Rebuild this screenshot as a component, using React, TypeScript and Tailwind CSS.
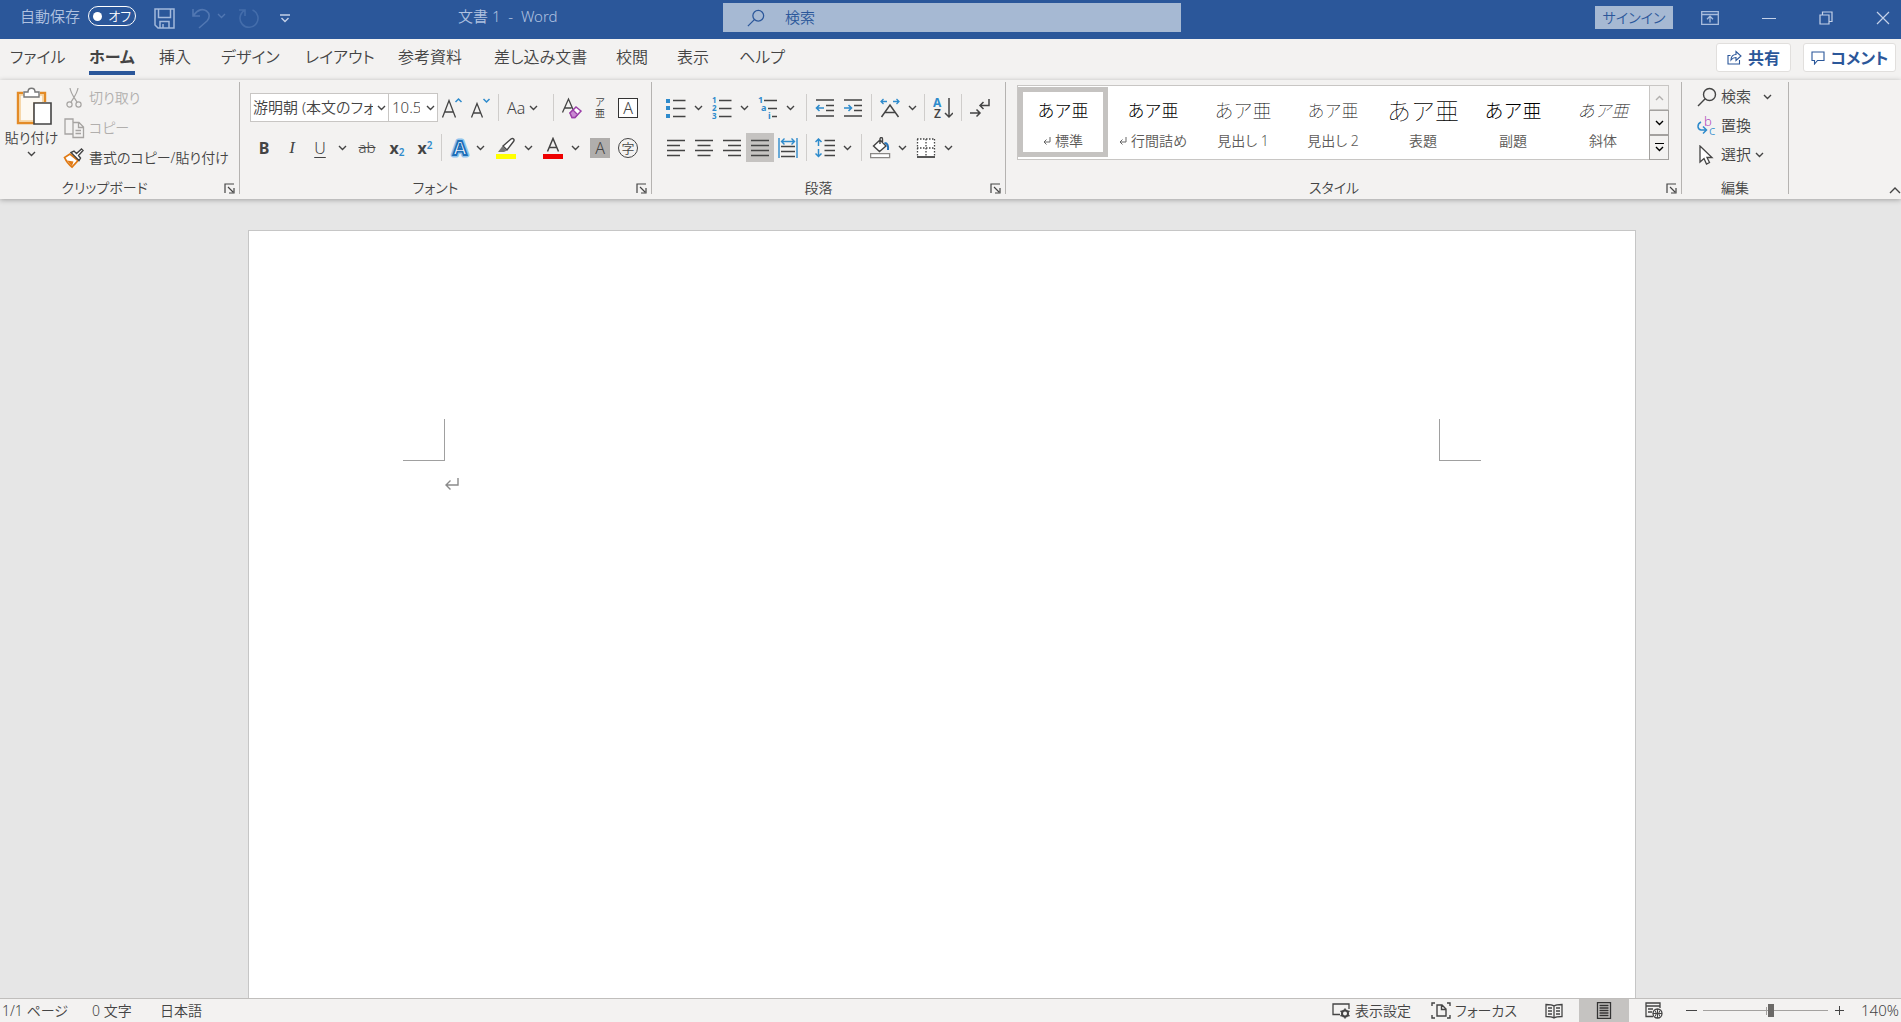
import type { ReactNode } from "react";

const INK = "#444444";
const BLUE = "#2e8bcc";

interface SvgProps {
  w?: number;
  h?: number;
  children: ReactNode;
}

function Svg({ w = 20, h = 20, children }: SvgProps) {
  return (
    <svg width={w} height={h} viewBox={`0 0 ${w} ${h}`} fill="none" stroke={INK} strokeWidth="1.3" className="shrink-0" aria-hidden="true">
      {children}
    </svg>
  );
}

function Chevron({ up = false }: { up?: boolean }) {
  return (
    <svg width="9" height="6" viewBox="0 0 9 6" fill="none" stroke="currentColor" strokeWidth="1.4" className="shrink-0" aria-hidden="true">
      <path d={up ? "M1 5 4.5 1.5 8 5" : "M1 1 4.5 4.5 8 1"} />
    </svg>
  );
}

function Tool({ label, wide = true, active = false, children }: { label: string; wide?: boolean; active?: boolean; children: ReactNode }) {
  return (
    <button
      type="button"
      aria-label={label}
      className={`flex h-[29px] shrink-0 items-center justify-center ${wide ? "w-7" : "w-6"} ${active ? "bg-[#c5c3c1]" : ""}`}
    >
      {children}
    </button>
  );
}

function Drop({ label }: { label: string }) {
  return (
    <button type="button" aria-label={label} className="flex h-[29px] w-4 shrink-0 items-center justify-center">
      <Chevron />
    </button>
  );
}

function Divider() {
  return <span className="mx-1 h-[27px] w-px shrink-0 bg-[#cfcdcb]" />;
}

function Launcher({ label }: { label: string }) {
  return (
    <button type="button" aria-label={label} className="flex w-5 shrink-0 justify-center">
      <Svg w={11} h={11}>
        <path d="M1 10V1h9M4 4l5 5M10 5v5H5" strokeWidth="1.2" />
      </Svg>
    </button>
  );
}

function Group({ title, launcher = true, className = "", children }: { title: string; launcher?: boolean; className?: string; children: ReactNode }) {
  return (
    <section aria-label={title} className={`flex shrink-0 flex-col border-r border-[#b5b3b1] ${className}`}>
      <div className="flex-1">{children}</div>
      <div className="flex h-3 items-center">
        <span className={`flex-1 text-center text-sm leading-3 ${launcher ? "pr-2.5" : ""}`}>{title}</span>
        {launcher && <Launcher label={`${title}の設定`} />}
      </div>
    </section>
  );
}

const tabs = [
  { name: "ファイル", width: "w-[79px]" },
  { name: "ホーム", width: "w-[70px]", active: true },
  { name: "挿入", width: "w-[62px]" },
  { name: "デザイン", width: "w-[84px]" },
  { name: "レイアウト", width: "w-[93px]" },
  { name: "参考資料", width: "w-[96px]" },
  { name: "差し込み文書", width: "w-[122px]" },
  { name: "校閲", width: "w-[61px]" },
  { name: "表示", width: "w-[62px]" },
  { name: "ヘルプ", width: "w-[62px]" },
];

const styles = [
  { name: "標準", mark: true, sample: "text-[17px] font-light text-black", active: true },
  { name: "行間詰め", mark: true, sample: "text-[17px] font-light text-black" },
  { name: "見出し 1", sample: "text-[19px] font-thin text-black" },
  { name: "見出し 2", sample: "text-[17px] font-thin text-black" },
  { name: "表題", sample: "text-[24px] font-thin text-black" },
  { name: "副題", sample: "text-[19px] font-light text-black" },
  { name: "斜体", sample: "text-[17px] italic font-thin text-black" },
];

function SearchGlyph({ size, color }: { size: number; color: string }) {
  return (
    <svg width={size} height={size} viewBox="0 0 20 20" fill="none" stroke={color} strokeWidth="1.4" className="shrink-0" aria-hidden="true">
      <circle cx="12.5" cy="7.5" r="6" />
      <path d="M8.2 11.8 1 19" />
    </svg>
  );
}

function TitleBar() {
  return (
    <header className="flex h-[39px] shrink-0 items-start bg-[#2b579a] text-[#b0c2e0]">
      <div className="flex w-[458px] shrink-0 items-center pl-5">
        <label htmlFor="autosave" className="leading-8">自動保存</label>
        <button id="autosave" type="button" role="switch" aria-checked="false" className="ml-2 flex h-5 w-12 shrink-0 items-center justify-between rounded-full border-[1.5px] border-white pr-1 pl-1 text-[13px] leading-4 whitespace-nowrap text-white">
          <span className="size-[9px] shrink-0 rounded-full bg-white" />
          オフ
        </button>
        <button type="button" aria-label="上書き保存" className="mt-1 ml-[18px]">
          <svg width="21" height="21" viewBox="0 0 21 21" fill="none" stroke="#a3b9dc" strokeWidth="1.5">
            <path d="M1 1h19v19H4l-3-3zM4.500 1v8.500h12V1M6 20v-6.500h9V20M9 16v4" />
          </svg>
        </button>
        <button type="button" aria-label="元に戻す" className="mt-1 ml-4">
          <svg width="20" height="21" viewBox="0 0 20 21" fill="none" stroke="#5177b2" strokeWidth="1.6">
            <path d="M2 1v7h7M2.500 7.500C7 1 12 .500 15.500 3c3.500 2.500 3.500 7 .500 10l-8 7" />
          </svg>
        </button>
        <button type="button" aria-label="元に戻す履歴" className="ml-1.5 text-[#5177b2]">
          <Chevron />
        </button>
        <button type="button" aria-label="繰り返し" className="mt-1 ml-3">
          <svg width="22" height="21" viewBox="0 0 22 21" fill="none" stroke="#446dab" strokeWidth="1.6">
            <path d="M1 2h6v6M14.500 2A9 9 0 1 1 6.500 2.500" />
          </svg>
        </button>
        <button type="button" aria-label="クイック アクセスのカスタマイズ" className="ml-5 pt-1">
          <svg width="10" height="9" viewBox="0 0 10 9" fill="none" stroke="#c4d1e8" strokeWidth="1.4">
            <path d="M0 1h10M1.500 4 5 7.500 8.500 4" />
          </svg>
        </button>
      </div>
      <h1 className="w-[265px] shrink-0 leading-8 whitespace-pre">文書 1  -  Word</h1>
      <label className="mt-[3px] flex h-[29px] w-[458px] shrink-0 items-center bg-[#a6b9d3] pl-6">
        <SearchGlyph size={18} color="#2b579a" />
        <input type="search" placeholder="検索" aria-label="検索" className="ml-5 w-full bg-transparent outline-none placeholder:text-[#2b579a]" />
      </label>
      <div className="flex flex-1 items-center justify-end pt-1.5 pr-[11px]">
        <button type="button" className="mr-7 h-[23px] w-[78px] bg-[#a6b9d3] text-sm leading-5 text-[#2b579a]">サインイン</button>
        <button type="button" aria-label="リボンの表示オプション" className="mr-[43px]">
          <svg width="18" height="14" viewBox="0 0 18 14" fill="none" stroke="#a9bddd" strokeWidth="1.3">
            <path d="M.700.700h16.600v12.600H.700zM.700 3.500h16.600M9 11.500V5.500M6 8.200l3-3 3 3" />
          </svg>
        </button>
        <button type="button" aria-label="最小化" className="mr-[43px]">
          <svg width="14" height="14" viewBox="0 0 14 14" stroke="#c4d1e8"><path d="M0 7.500h14" /></svg>
        </button>
        <button type="button" aria-label="元に戻す (縮小)" className="mr-[43px]">
          <svg width="14" height="14" viewBox="0 0 14 14" fill="none" stroke="#c4d1e8" strokeWidth="1.2">
            <path d="M1 4h9v9H1zM3.500 4V1H13v9.500h-3" />
          </svg>
        </button>
        <button type="button" aria-label="閉じる">
          <svg width="14" height="14" viewBox="0 0 14 14" stroke="#c4d1e8" strokeWidth="1.2"><path d="m1 1 12 12M13 1 1 13" /></svg>
        </button>
      </div>
    </header>
  );
}

function TabBar() {
  return (
    <nav className="flex h-[41px] shrink-0 items-start pr-[5px] pl-2.5">
      {tabs.map((tab) => (
        <button key={tab.name} type="button" className={`${tab.width} shrink-0 pt-1.5 text-left text-base leading-6 whitespace-nowrap`}>
          <span className={`inline-block h-[30px] ${tab.active ? "border-b-4 border-[#2b579a] font-bold" : ""}`}>{tab.name}</span>
        </button>
      ))}
      <div className="flex flex-1 justify-end gap-3 pt-1 text-base font-bold text-[#2b579a]">
        <button type="button" className="flex h-[29px] w-[75px] items-center justify-center gap-1.5 rounded-[3px] border border-[#e1dfdd] bg-white">
          <svg width="15" height="15" viewBox="0 0 15 15" fill="none" stroke="#2b579a" strokeWidth="1.1">
            <path d="M3.500 5.500H1v8.500h11.500v-4M9 1.500v3c-3 0-5 2-5 5.500C5.500 8 7 7.500 9 7.500v3L14 6z" />
          </svg>
          共有
        </button>
        <button type="button" className="flex h-[29px] w-[93px] items-center justify-center gap-1.5 rounded-[3px] border border-[#e1dfdd] bg-white">
          <svg width="14" height="14" viewBox="0 0 14 14" fill="none" stroke="#2b579a" strokeWidth="1.1">
            <path d="M1 1h12v8.500H6.500L3.500 13V9.500H1z" />
          </svg>
          コメント
        </button>
      </div>
    </nav>
  );
}

function ClipboardGroup() {
  return (
    <Group title="クリップボード" className="w-[240px]">
      <div className="flex text-sm">
        <button type="button" className="flex w-[63px] flex-col items-center pt-[5px]">
          <span className="ml-1">
            <Svg w={36} h={39}>
              <path d="M7 6H2v30h17M24 6h5v9" stroke="#e38b27" strokeWidth="2.4" />
              <path d="M4 8h23v8h-9v18H4z" fill="#fdf9f2" stroke="#f6cf96" strokeWidth="1.6" />
              <path d="M8 10V5h4c0-5 7-5 7 0h4v5z" fill="#fff" stroke="#777" strokeWidth="1.4" />
              <path d="M18 16h17v21H18z" fill="#fff" strokeWidth="1.6" />
            </Svg>
          </span>
          <span className="leading-6">貼り付け</span>
          <span className="mt-px"><Chevron /></span>
        </button>
        <div className="flex flex-col pt-px whitespace-nowrap">
          <button type="button" disabled className="flex h-[30px] items-center gap-1 text-[#b1afad]">
            <Svg w={22} h={22}>
              <g stroke="#a6a4a2" strokeWidth="1.2">
                <path d="M7 1c1 6 4 9 7 14M15 1c-1 6-4 9-7 14" />
                <circle cx="6.500" cy="17.500" r="2.600" />
                <circle cx="15.500" cy="17.500" r="2.600" />
              </g>
            </Svg>
            切り取り
          </button>
          <button type="button" disabled className="flex h-[30px] items-center gap-1 text-[#b1afad]">
            <Svg w={22} h={22}>
              <g stroke="#a6a4a2" strokeWidth="1.3">
                <path d="M10 17H2V2h8v3" />
                <path d="M10 5.500h6l4.500 4.500v10.500H10zM15.500 6v4.500H20M12.500 13.500H18M12.500 16.500H18" />
              </g>
            </Svg>
            コピー
          </button>
          <button type="button" className="flex h-[30px] items-center gap-1">
            <Svg w={22} h={22}>
              <path d="M7 7 1.500 10.500c2 4.500 4 7 7.500 9.500l6-6.500z" fill="#fff" stroke="#e07a14" strokeWidth="1.700" />
              <path d="M4 13.500l6.500 1L9 19z" fill="#e07a14" stroke="none" />
              <path d="M8 5.500 16 13.500l1.500-2.500-2-2.500 4.500-5-1.500-1.500-5 4.500L11 4z" fill="#fff" strokeWidth="1.400" />
            </Svg>
            書式のコピー/貼り付け
          </button>
        </div>
      </div>
    </Group>
  );
}

function FontGroup() {
  return (
    <Group title="フォント" className="w-[412px] pl-2.5">
      <div className="flex flex-col gap-[11px] pt-[11px]">
        <div className="flex h-[29px] items-center">
          <div className="flex h-[29px] w-[139px] shrink-0 items-center border border-[#c8c6c4] bg-white pl-0.5">
            <input aria-label="フォント名" defaultValue="游明朝 (本文のフォント - 日本語)" className="mr-1 w-[120px] outline-none" />
            <button type="button" aria-label="フォント一覧" className="pr-1"><Chevron /></button>
          </div>
          <div className="-ml-px flex h-[29px] w-[50px] shrink-0 items-center border border-[#c8c6c4] bg-white pl-[3px]">
            <input aria-label="フォント サイズ" defaultValue="10.5" className="mr-1.5 w-7 outline-none" />
            <button type="button" aria-label="サイズ一覧"><Chevron /></button>
          </div>
          <Tool label="フォント サイズの拡大">
            <Svg w={22} h={24}>
              <path d="M1.500 21.500 8 4.500l6.500 17M3.800 16h8.400" />
              <path d="m14.500 6 3-3 3 3" stroke={BLUE} strokeWidth="1.500" />
            </Svg>
          </Tool>
          <Tool label="フォント サイズの縮小">
            <Svg w={22} h={24}>
              <path d="M2.500 21.500 8 7.500l5.500 14M4.300 17h7.400" />
              <path d="m14.500 3 3 3 3-3" stroke={BLUE} strokeWidth="1.500" />
            </Svg>
          </Tool>
          <Divider />
          <button type="button" aria-label="文字種の変換" className="flex h-[29px] w-[46px] shrink-0 items-center gap-1 pl-1 text-base">
            Aa <Chevron />
          </button>
          <Divider />
          <Tool label="すべての書式をクリア">
            <Svg w={22} h={24}>
              <path d="M1.500 16.500 7.500 3l5.200 12M3.500 12h7" />
              <path d="m9 17 6-6 5 4-6 6.500H11z" fill="#fff" stroke="#9b3fa8" strokeWidth="1.500" />
              <path d="m9 17 3-3 4.500 4.500-2.500 3h-3z" fill="#c98ad2" stroke="#9b3fa8" />
            </Svg>
          </Tool>
          <Tool label="ルビ">
            <span className="flex flex-col items-center text-[10px] leading-[11px]"><span>ア</span><span>亜</span></span>
          </Tool>
          <Tool label="囲み線">
            <span className="flex size-5 items-center justify-center border-[1.5px] border-[#333] bg-white text-base leading-4">A</span>
          </Tool>
        </div>
        <div className="flex h-[29px] items-center">
          <Tool label="太字"><b className="text-base">B</b></Tool>
          <Tool label="斜体"><i className="font-[Liberation_Serif,serif] text-[17px]">I</i></Tool>
          <Tool label="下線"><span className="text-base underline underline-offset-3">U</span></Tool>
          <Drop label="下線の種類" />
          <span className="w-[3px]" />
          <Tool label="取り消し線"><span className="text-[15px] line-through">ab</span></Tool>
          <span className="w-0.5" />
          <Tool label="下付き"><span className="text-base leading-4 font-bold">x<sub className="text-[10px] font-semibold text-[#2e8bcc]">2</sub></span></Tool>
          <Tool label="上付き"><span className="text-base leading-4 font-bold">x<sup className="text-[10px] font-semibold text-[#2e8bcc]">2</sup></span></Tool>
          <span className="ml-0.5 h-[27px] w-px bg-[#cfcdcb]" />
          <span className="w-1.5" />
          <Tool label="文字の効果と体裁" wide={false}>
            <Svg w={22} h={22}>
              <text x="11" y="18" textAnchor="middle" fontSize="20" fontWeight="700" fill="#fff" stroke="#8fc3ec" strokeWidth="5" strokeLinejoin="round">A</text>
              <text x="11" y="18" textAnchor="middle" fontSize="20" fontWeight="700" fill="#fff" stroke="#1e6fb8" strokeWidth="1.800">A</text>
            </Svg>
          </Tool>
          <Drop label="文字の効果一覧" />
          <span className="w-1" />
          <Tool label="蛍光ペンの色">
            <Svg w={20} h={22}>
              <path d="M0 17h20v5H0z" fill="#ffff00" stroke="none" />
              <path d="m7 9 8-7c2-1.500 4 .500 2.500 2.500L11 13z" fill="#fff" strokeWidth="1.400" />
              <path d="M6.500 9 11 13.500 8 15H2z" fill="#777" stroke="none" />
            </Svg>
          </Tool>
          <Drop label="蛍光ペンの色一覧" />
          <span className="w-[3px]" />
          <Tool label="フォントの色">
            <Svg w={20} h={22}>
              <path d="M0 17h20v5H0z" fill="#ee0000" stroke="none" />
              <path d="M4.500 14.500 10 1.500l5.500 13M6.500 10.500h7" strokeWidth="1.500" />
            </Svg>
          </Tool>
          <Drop label="フォントの色一覧" />
          <span className="w-[3px]" />
          <Tool label="文字の網かけ">
            <span className="flex size-5 items-center justify-center bg-[#b0aeac] text-base leading-4">A</span>
          </Tool>
          <Tool label="囲い文字">
            <span className="flex size-5 items-center justify-center rounded-full border-[1.5px] border-[#444] text-[13px] leading-3">字</span>
          </Tool>
        </div>
      </div>
    </Group>
  );
}

function ParagraphGroup() {
  return (
    <Group title="段落" className="w-[354px] pl-2.5">
      <div className="flex flex-col gap-[11px] pt-[11px]">
        <div className="flex h-[29px] items-center">
          <Tool label="箇条書き">
            <Svg>
              <path d="M0 1h4v4H0zM0 8h4v4H0zM0 16h4v4H0z" fill={BLUE} stroke="none" />
              <path d="M7 2.500h12.500M7 10.500h12.500M7 18.500h12.500" />
            </Svg>
          </Tool>
          <Drop label="箇条書き一覧" />
          <span className="w-0.5" />
          <Tool label="段落番号">
            <Svg w={20} h={22}>
              <g fill={BLUE} stroke="none" fontSize="8" fontWeight="700">
                <text x="0" y="6">1</text>
                <text x="0" y="14">2</text>
                <text x="0" y="22">3</text>
              </g>
              <path d="M7 3.500h12.500M7 11.500h12.500M7 19.500h12.500" />
            </Svg>
          </Tool>
          <Drop label="段落番号一覧" />
          <span className="w-0.5" />
          <Tool label="アウトライン">
            <Svg w={20} h={22}>
              <g fill={BLUE} stroke="none" fontSize="9" fontWeight="700">
                <text x="0" y="6">1</text>
                <text x="3" y="14">a</text>
                <text x="10" y="22">i</text>
              </g>
              <path d="M6 3.500h13M10 11.500h9M14 19.500h5" />
            </Svg>
          </Tool>
          <Drop label="アウトライン一覧" />
          <span className="w-1" />
          <Divider />
          <Tool label="インデントを減らす">
            <Svg>
              <path d="M1 2h18M11 7.500h8M11 12.500h8M1 18h18" />
              <path d="M9 10H1.500M4.500 7l-3 3 3 3" stroke={BLUE} strokeWidth="1.600" />
            </Svg>
          </Tool>
          <Tool label="インデントを増やす">
            <Svg>
              <path d="M1 2h18M11 7.500h8M11 12.500h8M1 18h18" />
              <path d="M1 10h7.500M5.500 7l3 3-3 3" stroke={BLUE} strokeWidth="1.600" />
            </Svg>
          </Tool>
          <Divider />
          <Tool label="拡張書式">
            <Svg>
              <path d="m1.500 19 8.500-12 8.500 12M5 14.500h10" strokeWidth="1.500" />
              <path d="M7 3.500H1M3.500 1 1 3.500 3.500 6M13 3.500h6M16.500 1 19 3.500 16.500 6" stroke={BLUE} />
            </Svg>
          </Tool>
          <Drop label="拡張書式一覧" />
          <Divider />
          <Tool label="並べ替え">
            <Svg w={20} h={22}>
              <text x="0" y="10" fontSize="12" fontWeight="700" fill={BLUE} stroke="none">A</text>
              <text x="1" y="21" fontSize="12" fontWeight="600" fill={INK} stroke="none">Z</text>
              <path d="M16 1v19M12 16l4 4 4-4" strokeWidth="1.500" />
            </Svg>
          </Tool>
          <Divider />
          <Tool label="編集記号の表示">
            <Svg>
              <path d="M19 1v6.500h-9M13.500 4 10 7.500l3.500 3.500M0 15h10M6.500 11.500 10 15l-3.500 3.500" strokeWidth="1.500" />
            </Svg>
          </Tool>
        </div>
        <div className="flex h-[29px] items-center">
          <Tool label="左揃え"><Svg><path d="M1 2.500h18M1 7.500h13M1 12.500h18M1 17.500h13" strokeWidth="1.500" /></Svg></Tool>
          <Tool label="中央揃え"><Svg><path d="M1 2.500h18M3.500 7.500h13M1 12.500h18M3.500 17.500h13" strokeWidth="1.500" /></Svg></Tool>
          <Tool label="右揃え"><Svg><path d="M1 2.500h18M6 7.500h13M1 12.500h18M6 17.500h13" strokeWidth="1.500" /></Svg></Tool>
          <Tool label="両端揃え" active><Svg><path d="M1 2.500h18M1 7.500h18M1 12.500h18M1 17.500h18" strokeWidth="1.500" /></Svg></Tool>
          <Tool label="均等割り付け">
            <Svg>
              <path d="M3 8.500h14M3 13.500h14M3 18.500h14" strokeWidth="1.500" />
              <path d="M1 0v20M19 0v20M3.500 3.500h13M6.500.500l-3 3 3 3M13.500.500l3 3-3 3" stroke={BLUE} strokeWidth="1.400" />
            </Svg>
          </Tool>
          <Divider />
          <Tool label="行と段落の間隔">
            <Svg>
              <path d="M9.500 2.500H20M9.500 7.500H20M9.500 12.500H20M9.500 17.500H20" />
              <path d="M3.500 1v7M.500 4l3-3 3 3M3.500 11v7.500M.500 15.500l3 3 3-3" stroke={BLUE} strokeWidth="1.500" />
            </Svg>
          </Tool>
          <Drop label="行間一覧" />
          <span className="w-0.5" />
          <Divider />
          <Tool label="塗りつぶし">
            <Svg w={21} h={22}>
              <path d="M.600 16.600h19v4H.600z" fill="#fff" stroke="#8a8886" />
              <path d="m10 3 6 6-6.500 5.500L3.500 9zM10 7V2c0-2 2.500-2 2.500 0v4" fill="#fff" strokeWidth="1.400" />
              <path d="M14.500 6c3 0 4 2.500 3.500 7" stroke="#2372b8" strokeWidth="2" />
            </Svg>
          </Tool>
          <Drop label="塗りつぶしの色" />
          <span className="w-0.5" />
          <Tool label="罫線">
            <Svg>
              <path d="M1 1h18v17H1z" fill="#fff" stroke="none" />
              <path d="M1 1h18M1 10h18M1.500 1v18M10 1v18M18.500 1v18" strokeDasharray="1.500 1.500" />
              <path d="M1 19h18" strokeWidth="1.800" />
            </Svg>
          </Tool>
          <Drop label="罫線一覧" />
        </div>
      </div>
    </Group>
  );
}

function StylesGroup() {
  return (
    <Group title="スタイル" className="min-w-0 flex-1 pl-[11px]">
      <div className="mt-[3px] mr-3 flex h-[75px] border border-[#c8c6c4] bg-white">
        <div className="flex min-w-0 flex-1 overflow-hidden pt-px">
          {styles.map((style) => (
            <button
              key={style.name}
              type="button"
              className={`flex h-[70px] w-[90px] shrink-0 flex-col items-center border-[5px] whitespace-nowrap ${style.active ? "border-[#c5c3c1]" : "border-transparent"}`}
            >
              <span className={`flex h-[38px] items-center [font-feature-settings:normal] ${style.sample}`}>あア亜</span>
              <span className="flex items-center gap-1 text-sm leading-[22px] text-[#5c5a58]">
                {style.mark && (
                  <svg width="8" height="8" viewBox="0 0 8 8" fill="none" stroke="#666" aria-hidden="true">
                    <path d="M7 0v5H1M3.500 2.500 1 5l2.500 2.500" />
                  </svg>
                )}
                {style.name}
              </span>
            </button>
          ))}
        </div>
        <div className="-my-px -mr-px flex w-5 shrink-0 flex-col">
          <button type="button" aria-label="前の行" className="flex flex-1 items-center justify-center border border-[#c8c6c4] bg-[#f3f2f1] text-[#b1afad]"><Chevron up /></button>
          <button type="button" aria-label="次の行" className="flex flex-1 items-center justify-center border border-[#a3a19f] bg-[#f3f2f1] text-black"><Chevron /></button>
          <button type="button" aria-label="スタイル一覧" className="flex flex-1 flex-col items-center justify-center gap-0.5 border border-[#a3a19f] bg-[#f3f2f1] text-black">
            <span className="h-px w-[9px] bg-black" />
            <Chevron />
          </button>
        </div>
      </div>
    </Group>
  );
}

function EditingGroup() {
  return (
    <Group title="編集" launcher={false} className="w-[107px]">
      <div className="flex flex-col pl-[15px]">
        <button type="button" className="flex h-[29px] items-center gap-1">
          <SearchGlyph size={20} color={INK} />
          <span className="mr-2">検索</span>
          <Chevron />
        </button>
        <button type="button" className="flex h-[29px] items-center gap-1">
          <Svg>
            <text x="7" y="10" fontSize="13" fill="#b04bbd" stroke="none">b</text>
            <text x="12" y="19" fontSize="13" fill={BLUE} stroke="none">c</text>
            <path d="M4 6c-4 2-4 7 0 8h5M6 10.500l3.500 3.500L6 17.500" stroke={BLUE} strokeWidth="1.500" />
          </Svg>
          置換
        </button>
        <button type="button" className="flex h-[29px] items-center gap-1">
          <Svg>
            <path d="M3 1v16l4-3.500 2.500 5.500 3-1.500L10 12.500h5z" fill="#fff" />
          </Svg>
          <span>選択</span>
          <Chevron />
        </button>
      </div>
    </Group>
  );
}

function StatusBar() {
  return (
    <footer className="flex h-6 shrink-0 items-center overflow-hidden border-t border-[#c0bebc] bg-[#f3f2f1] text-sm whitespace-nowrap">
      <div className="flex flex-1 gap-6 pl-0.5">
        <span className="w-[66px]">1/1 ページ</span>
        <span className="w-11">0 文字</span>
        <span>日本語</span>
      </div>
      <button type="button" className="flex items-center gap-1">
        <Svg w={19} h={17}>
          <path d="M8 12.500H1V2h16v5" />
          <circle cx="13" cy="11.500" r="3" strokeWidth="2" />
          <path d="M13 6.500v2M13 14.500v2M8.500 9l2 1M15.500 13l2 1M8.500 14l2-1M15.500 10l2-1" strokeWidth="1.600" />
        </Svg>
        表示設定
      </button>
      <button type="button" className="ml-5 flex items-center gap-1">
        <Svg w={20} h={17}>
          <path d="M4 1H1v3M1 13v3h3M16 1h3v3M19 13v3h-3M6 3h5l4 4v7H6zM10.500 3v4.500H15" strokeWidth="1.400" />
        </Svg>
        フォーカス
      </button>
      <button type="button" aria-label="閲覧モード" className="ml-3 flex w-[50px] justify-center">
        <Svg w={18} h={16}>
          <path d="M9 3C7 1.500 4 1.500 1 1.500v12c3 0 6 0 8 1.500 2-1.500 5-1.500 8-1.500v-12c-3 0-6 0-8 1.500zM9 3v12M3 5h4M3 8h4M3 11h4M11 5h4M11 8h4M11 11h4" />
        </Svg>
      </button>
      <button type="button" aria-label="印刷レイアウト" className="flex h-6 w-[50px] items-center justify-center bg-[#c5c3c1]">
        <Svg w={16} h={17}>
          <path d="M1.500.700h13v15.600h-13zM3.500 3.500h9M3.500 6h9M3.500 8.500h9M3.500 11h9M3.500 13.500h9" stroke="#333" />
        </Svg>
      </button>
      <button type="button" aria-label="Web レイアウト" className="flex w-[50px] justify-center">
        <Svg w={18} h={17}>
          <path d="M8 14.500H1V1h14v5M1 4h14M3 7h5M3 10h4" />
          <circle cx="12.500" cy="11.500" r="4.500" fill="#f3f2f1" />
          <path d="M8 11.500h9M12.500 7v9M10 8.500c1.500 2 1.500 4 0 6M15 8.500c-1.500 2-1.500 4 0 6" strokeWidth="1" />
        </Svg>
      </button>
      <button type="button" aria-label="縮小" className="flex w-6 justify-center">
        <Svg w={11} h={11}><path d="M0 5.500h11" strokeWidth="1" /></Svg>
      </button>
      <label className="relative flex w-[125px] items-center before:absolute before:left-1/2 before:h-2 before:w-px before:bg-[#a3a19f]">
        <input
          type="range"
          aria-label="ズーム"
          min={10}
          max={270}
          defaultValue={153}
          className="h-5 w-full appearance-none bg-transparent [&::-webkit-slider-runnable-track]:h-px [&::-webkit-slider-runnable-track]:bg-[#a3a19f] [&::-webkit-slider-thumb]:-mt-1.5 [&::-webkit-slider-thumb]:h-[13px] [&::-webkit-slider-thumb]:w-1.5 [&::-webkit-slider-thumb]:appearance-none [&::-webkit-slider-thumb]:bg-[#6b6967]"
        />
      </label>
      <button type="button" aria-label="拡大" className="flex w-[22px] justify-center">
        <Svg w={11} h={11}><path d="M1 5.500h9M5.500 1v9" strokeWidth="1" /></Svg>
      </button>
      <button type="button" className="ml-[11px] w-10 text-left text-[15px]">140%</button>
    </footer>
  );
}

export default function App() {
  return (
    <div className="flex h-screen flex-col overflow-hidden bg-[#f3f2f1] font-['Noto_Sans','Noto_Sans_CJK_JP',sans-serif] text-[15px] font-[350] text-[#444] [font-feature-settings:'palt']">
      <TitleBar />
      <TabBar />
      <div className="z-10 flex h-[119px] shrink-0 bg-[#f3f2f1] pt-0.5 pb-[5px] shadow-[0_1px_5px_rgba(0,0,0,0.3)]">
        <ClipboardGroup />
        <FontGroup />
        <ParagraphGroup />
        <StylesGroup />
        <EditingGroup />
        <div className="flex w-28 shrink-0 items-end justify-end">
          <button type="button" aria-label="リボンを折りたたむ">
            <Svg w={12} h={8}><path d="m1 7 5-5 5 5" strokeWidth="1.400" /></Svg>
          </button>
        </div>
      </div>
      <main className="flex min-h-0 flex-1 justify-center overflow-hidden bg-[#e6e6e6] pt-[31px] pr-[18px]">
        <article className="flex w-[1388px] shrink-0 justify-between border border-b-0 border-[#c6c6c6] bg-white px-[154px] pt-[188px]">
          <div>
            <div className="h-[42px] w-[42px] border-r border-b border-[#a0a0a0]" />
            <svg width="14" height="14" viewBox="0 0 14 14" fill="none" stroke="#8a8a8a" strokeWidth="1.400" className="mt-4 ml-[42px]" aria-label="段落記号">
              <path d="M13 1v7H1M5.500 3.500 1 8l4.500 4.500" />
            </svg>
          </div>
          <div className="h-[42px] w-[42px] border-b border-l border-[#a0a0a0]" />
        </article>
      </main>
      <StatusBar />
    </div>
  );
}
